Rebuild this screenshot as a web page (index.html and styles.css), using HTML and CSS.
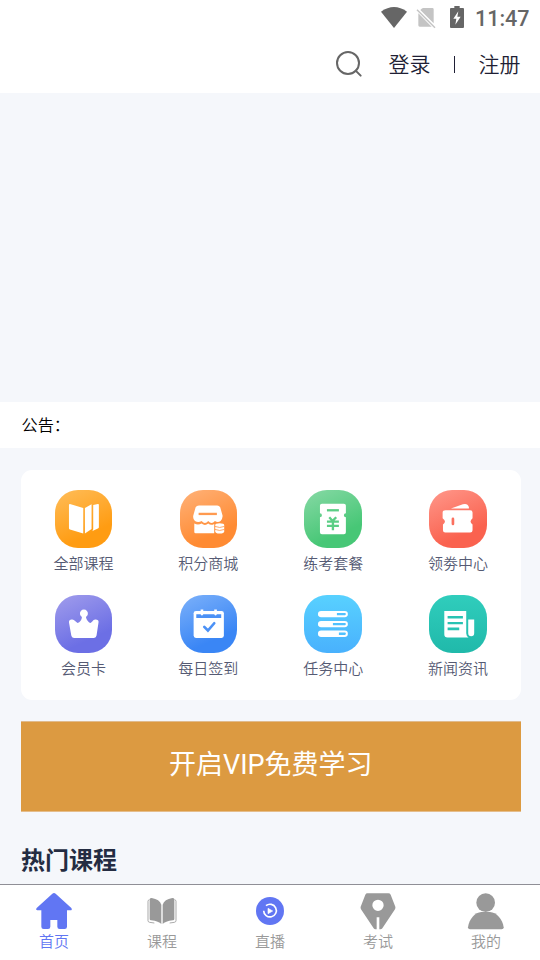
FILE: index.html
```
<!DOCTYPE html>
<html lang="zh-CN">
<head>
<meta charset="utf-8">
<title>首页</title>
<link rel="stylesheet" href="styles.css">
</head>
<body>
<div class="status">
  <svg class="wifi" viewBox="0 0 78 63"><path d="M0 14Q39-14 78 14L39 63Z"/></svg>
  <svg class="sim" viewBox="0 0 58 60"><path class="pale" d="M20 0H48Q52 0 52 4V46L12 6L16 2ZM6 16L46 56H10Q6 56 6 52Z"/><path class="slash" d="M2 5L56 59"/></svg>
  <svg class="battery" viewBox="0 0 42 66"><path d="M13 0H29V6H39Q42 6 42 9V63Q42 66 39 66H3Q0 66 0 63V9Q0 6 3 6H13Z"/><path class="bolt" d="M25 16L10 38H19L16 56L32 32H22Z"/></svg>
  <span class="clock">11:47</span>
</div>
<header class="top">
  <svg class="search" viewBox="0 0 78 78"><circle cx="36" cy="36" r="33"/><path d="M59 59L74 74"/></svg>
  <a class="link">登录</a>
  <span class="divider"></span>
  <a class="link">注册</a>
</header>
<div class="hero"></div>
<div class="notice">公告：</div>
<main class="content">
  <section class="menu">
    <div class="item">
      <svg class="tile orange" viewBox="45 30 173 173"><path d="M90 72L130 84V161L90 149Q87 148 87 145V75Q87 72 90 72ZM135 84L155 73V147L135 161ZM160 75L174 72Q177 71 177 75V142Q177 145 174 146L156 154Q160 151 160 147Z"/></svg>
      <span>全部课程</span>
    </div>
    <div class="item">
      <svg class="tile peach" viewBox="419 30 173 173"><path d="M476 77H531Q537 77 540 82L547 107Q548 116 541 123Q533 130 524 123Q514 136 504 123Q494 136 484 123Q474 130 464 123Q457 116 459 107L466 82Q469 77 476 77Z"/><path d="M462 131Q473 137 484 131Q494 140 504 131Q512 138 522 132V160H466Q462 160 462 156Z"/><path d="M525 135Q525 130 538 130Q552 130 552 135V154Q552 161 538 161Q525 161 525 154Z"/><path class="ink thin" d="M525 140Q538 146 552 140M525 149Q538 155 552 149"/><path class="ink bar" d="M475 102H530"/></svg>
      <span>积分商城</span>
    </div>
    <div class="item">
      <svg class="tile green" viewBox="42 30 173 173"><path d="M96 71H162Q168 71 168 77V100A6 6 0 0 0 168 112V157Q168 163 162 163H96Q90 163 90 157V112A6 6 0 0 0 90 100V77Q90 71 96 71Z"/><path class="ink bar" d="M111 91H147"/><path class="ink yen" d="M118 112L128 123L139 112M111 125H147M111 138H147M129 123V151"/></svg>
      <span>练考套餐</span>
    </div>
    <div class="item">
      <svg class="tile red" viewBox="416 30 173 173"><path d="M482 86L518 73Q532 69 536 81V86ZM466 91H540Q547 91 547 98V115Q541 120 541 125Q541 130 547 134V151Q547 158 540 158H465Q458 158 458 151V134Q464 130 464 125Q464 120 457 115V98Q457 91 466 91Z"/><path class="ink ticket" d="M488 117V132"/></svg>
      <span>领劵中心</span>
    </div>
    <div class="item">
      <svg class="tile purple" viewBox="45 30 173 173"><path d="M126 96A12 12 0 1 1 138 96C139 105 146 112 151 114C157 114 159 103 167 104Q177 104 176 112L170 152Q169 159 162 159H102Q95 159 94 152L87 112Q87 104 95 104C103 102 107 112 113 114C120 112 126 105 126 96Z"/></svg>
      <span>会员卡</span>
    </div>
    <div class="item">
      <svg class="tile blue" viewBox="419 30 173 173"><rect x="460" y="78" width="91" height="81" rx="7"/><path d="M481 74H489V90H481ZM522 74H530V90H522Z"/><path class="ink fill" d="M468 88H481Q485 96 489 88H522Q526 96 530 88H543V99H468Z"/><path class="ink check" d="M492 126L503 137L522 115"/></svg>
      <span>每日签到</span>
    </div>
    <div class="item">
      <svg class="tile sky" viewBox="42 30 173 173"><rect x="84" y="78" width="90" height="19" rx="9.5"/><rect x="84" y="108" width="90" height="19" rx="9.5"/><rect x="84" y="137" width="90" height="19" rx="9.5"/><path class="ink fill" d="M141 84H165Q168 84 168 87.500Q168 91 165 91H141ZM129 114H165Q168 114 168 117.500Q168 121 165 121H129ZM147 143H165Q168 143 168 146.500Q168 150 165 150H147Z"/></svg>
      <span>任务中心</span>
    </div>
    <div class="item">
      <svg class="tile teal" viewBox="416 30 173 173"><path d="M462 78H528V145Q528 153 535 158H472Q462 158 462 148ZM534 104H552V145Q552 154 543 154Q534 154 534 145Z"/><path class="ink fill" d="M472 93H518V101H472ZM472 111H518V118H472ZM472 128H507V136H472Z"/></svg>
      <span>新闻资讯</span>
    </div>
  </section>
  <section class="vip">开启VIP免费学习</section>
  <h2 class="heading">热门课程</h2>
</main>
<nav class="tabs">
  <a class="tab active">
    <svg viewBox="108 189 108 108"><path d="M157 191Q162 187 167 191L214 234Q218 241 211 241H201V290Q201 297 194 297H179Q172 297 172 290V270H151V290Q151 297 144 297H131Q124 297 124 290V241H112Q106 240 110 234Z"/></svg>
    <span>首页</span>
  </a>
  <a class="tab">
    <svg viewBox="433 189 108 108"><path d="M450 207Q451 204 456 204Q480 208 485 224V282Q478 274 454 271Q450 271 450 267ZM524 207Q523 204 518 204Q494 208 489 224V282Q496 274 520 271Q524 271 524 267Z"/><path class="cover" d="M449 209Q445 210 445 214V272Q445 276 450 277L464 279M525 209Q529 210 529 214V272Q529 276 524 277L510 279"/></svg>
    <span>课程</span>
  </a>
  <a class="tab">
    <svg class="live" viewBox="216 38 108 108"><circle cx="270" cy="92" r="42"/><path class="ring" d="M258 76A19 19 0 1 1 251 91"/><path class="play" d="M264 84V100L278 92Z"/></svg>
    <span>直播</span>
  </a>
  <a class="tab">
    <svg viewBox="61 38 108 108"><path fill-rule="evenodd" d="M83 39H146Q151 39 153 43L167 79Q168 83 166 87L128 144Q126 147 122 147H119V111H111V147H107Q104 147 102 144L64 87Q62 83 63 79L77 43Q79 39 83 39ZM115 58A17 17 0 1 0 115 92A17 17 0 1 0 115 58Z"/></svg>
    <span>考试</span>
  </a>
  <a class="tab">
    <svg viewBox="384 38 108 108"><circle cx="437" cy="67" r="28"/><path d="M384 141C387 116 405 96 424 95H450C469 96 488 116 491 141Q491 147 485 147H390Q384 147 384 141Z"/></svg>
    <span>我的</span>
  </a>
</nav>
</body>
</html>
```

FILE: styles.css
```
* { box-sizing: border-box; }
body {
  margin: 0;
  width: 540px;
  height: 960px;
  overflow: hidden;
  display: flex;
  flex-direction: column;
  background: #f5f7fb;
  font-family: Roboto, "Noto Sans CJK SC", sans-serif;
  font-weight: 350;
}
svg { display: block; overflow: visible; }

.status {
  height: 36px;
  flex: none;
  display: flex;
  align-items: center;
  justify-content: flex-end;
  padding-right: 12px;
  background: #fff;
  color: #666;
  fill: #666;
}
.wifi { width: 26px; height: 21px; margin: 0 9px 2px 0; }
.sim { width: 20px; height: 20px; margin-right: 14px; }
.battery { width: 14px; height: 22px; margin: 0 11px 2px 0; }
.pale { fill: #c4c4c4; }
.slash { stroke: #c4c4c4; stroke-width: 4; }
.bolt { fill: #fff; }
.clock { width: 54px; margin-right: -1px; font-size: 21.500px; font-weight: 500; line-height: 34px; padding-top: 2px; }

.top {
  height: 57px;
  flex: none;
  display: flex;
  align-items: center;
  justify-content: flex-end;
  padding-right: 19.500px;
  background: #fff;
}
.search {
  width: 26px;
  height: 26px;
  margin: 0 27px 1px 0;
  fill: none;
  stroke: #666;
  stroke-width: 6;
  stroke-linecap: round;
}
.link { font-size: 21px; line-height: 56px; color: #1f1f35; }
.divider { width: 1px; height: 17px; margin: 0 24px 0 23px; background: #1f1f35; }

.hero { height: 309px; flex: none; }
.notice {
  height: 46px;
  flex: none;
  padding-left: 21.500px;
  background: #fff;
  color: #000;
  font-size: 16.200px;
  line-height: 47px;
}

.content {
  flex: 1;
  min-height: 0;
  overflow: hidden;
  padding: 22px 19.500px 0 21px;
}
.menu {
  height: 230px;
  display: grid;
  grid-template-columns: repeat(4, 1fr);
  grid-auto-rows: 105px;
  padding-top: 20px;
  background: #fff;
  border-radius: 11px;
}
.item {
  display: flex;
  flex-direction: column;
  align-items: center;
  color: #555a73;
  font-size: 15px;
  line-height: 22px;
}
.item span { margin-top: 5px; }
.tile {
  width: 57.500px;
  height: 57.500px;
  border-radius: 23px;
  fill: #fff;
  color: var(--ink);
}
.orange { background: linear-gradient(155deg, #ffbd59, #ff9c12 72%); --ink: #ffa529; }
.peach { background: linear-gradient(155deg, #ffb279, #ff8b33 72%); --ink: #ff9a50; }
.green { background: linear-gradient(155deg, #87d9a5, #47c776 72%); --ink: #5bce85; }
.red { background: linear-gradient(155deg, #ff988b, #fa624f 72%); --ink: #fb705f; }
.purple { background: linear-gradient(155deg, #a19dec, #6c6fe5 72%); --ink: #7c7be8; }
.blue { background: linear-gradient(155deg, #7cb1fa, #3a86f5 72%); --ink: #4b91f6; }
.sky { background: linear-gradient(180deg, #58d1ff, #49b1fd); --ink: #50c1fe; }
.teal { background: linear-gradient(180deg, #30cdbc, #20b9aa); --ink: #28c3b3; }
.ink { fill: none; stroke: currentColor; stroke-linecap: round; }
.ink.fill { fill: currentColor; stroke: none; }
.ink.thin { stroke-width: 2.500; }
.ink.bar { stroke-width: 7; stroke-linecap: butt; }
.ink.yen { stroke-width: 7; stroke-linecap: butt; }
.ink.ticket { stroke-width: 8; }
.ink.check { stroke-width: 8; }

.vip {
  height: 91px;
  margin-top: 21px;
  border-top: 1px solid #e0bb8d;
  border-bottom: 1px solid #e5bd8b;
  background: #dc9a41;
  color: #fff;
  font-size: 27px;
  font-weight: 400;
  line-height: 86px;
  text-align: center;
}
.heading {
  margin: 31px 0 0;
  font-size: 24px;
  line-height: 36px;
  font-weight: 700;
  color: #242c42;
}

.tabs {
  height: 76px;
  flex: none;
  display: flex;
  border-top: 1px solid #8f8f96;
  background: #fff;
}
.tab {
  flex: 1;
  display: flex;
  flex-direction: column;
  align-items: center;
  padding-top: 8px;
  color: #999;
  fill: #999;
  font-size: 15px;
  line-height: 22px;
}
.tab svg { width: 36px; height: 36px; }
.tab span { margin-top: 2px; }
.tab.active { color: #6176f3; fill: #6176f3; }
.cover { fill: none; stroke: #999; stroke-width: 2.500; }
.live { fill: #6176f3; }
.ring { fill: none; stroke: #fff; stroke-width: 5; }
.play { fill: #fff; stroke: #fff; stroke-width: 2; stroke-linejoin: round; }
```
